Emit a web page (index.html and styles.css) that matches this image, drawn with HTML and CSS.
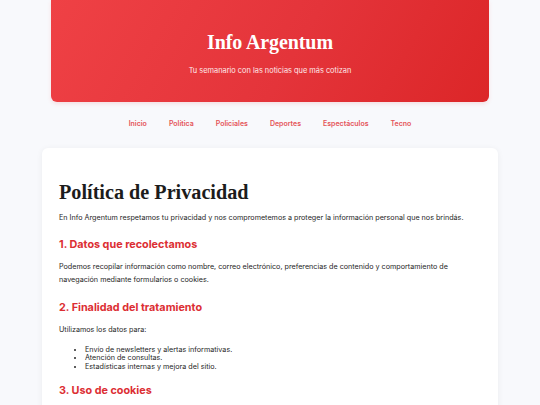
FILE: index.html
```html
<!DOCTYPE html>
<html lang="es">
<head>
<meta charset="utf-8">
<title>Política de Privacidad - Info Argentum</title>
<link rel="stylesheet" href="styles.css">
</head>
<body>
<header class="hero">
  <h1 class="brand">Info Argentum</h1>
  <p class="tagline">Tu semanario con las noticias que más cotizan</p>
</header>
<nav class="nav">
  <a href="#">Inicio</a>
  <a href="#">Política</a>
  <a href="#">Policiales</a>
  <a href="#">Deportes</a>
  <a href="#">Espectáculos</a>
  <a href="#">Tecno</a>
</nav>
<main class="card">
  <h1 class="title">Política de Privacidad</h1>
  <p>En Info Argentum respetamos tu privacidad y nos comprometemos a proteger la información personal que nos brindás.</p>
  <h2>1. Datos que recolectamos</h2>
  <p>Podemos recopilar información como nombre, correo electrónico, preferencias de contenido y comportamiento de navegación mediante formularios o cookies.</p>
  <h2>2. Finalidad del tratamiento</h2>
  <p>Utilizamos los datos para:</p>
  <ul>
    <li>Envío de newsletters y alertas informativas.</li>
    <li>Atención de consultas.</li>
    <li>Estadísticas internas y mejora del sitio.</li>
  </ul>
  <h2>3. Uso de cookies</h2>
</main>
</body>
</html>
```
FILE: styles.css
```css
* { box-sizing: border-box; }
html, body { margin: 0; padding: 0; }
body {
  background: #f8f9fc;
  font-family: Inter, "Noto Sans", sans-serif;
  color: #262626;
}
.hero {
  margin: 0 51px;
  height: 102px;
  border-radius: 0 0 6px 6px;
  background: linear-gradient(120deg, #ef4145 0%, #e4343a 55%, #dc2628 100%);
  display: flex;
  flex-direction: column;
  align-items: center;
  justify-content: center;
  padding-top: 5px;
  color: #fff;
  box-shadow: 0 2px 4px rgba(220, 38, 38, 0.12);
}
.brand {
  margin: 0;
  font-family: "Liberation Serif", "DejaVu Serif", serif;
  font-weight: 700;
  font-size: 20px;
  line-height: 1;
  letter-spacing: -0.1px;
}
.tagline {
  margin: 14px 0 0;
  font-size: 7.4px;
  color: #feeaea;
}
.nav {
  display: flex;
  justify-content: center;
  gap: 22px;
  padding: 17px 0 0;
  height: 46px;
}
.nav a {
  color: #e55459;
  text-decoration: none;
  font-size: 7px;
  font-weight: 600;
}
.card {
  margin: 0 42px;
  background: #fff;
  border-radius: 6px;
  padding: 29px 18px 20px 17px;
  box-shadow: 0 1px 6px rgba(15, 23, 42, 0.06);
  min-height: 300px;
}
.title {
  margin: 0;
  font-family: "Liberation Serif", "DejaVu Serif", serif;
  font-weight: 700;
  font-size: 20.2px;
  line-height: 30px;
  color: #1c1c1c;
}
.card p {
  margin: 0;
  font-size: 7.2px;
  line-height: 13px;
  color: #262626;
}
.title + p { margin-top: 3.5px; }
.card h2 {
  margin: 14.5px 0 8px;
  font-size: 10.8px;
  line-height: 14px;
  font-weight: 700;
  color: #dc2e33;
}
.card ul {
  margin: 10px 0 -1.5px;
  padding-left: 26px;
  font-size: 7.2px;
  line-height: 8.5px;
  color: #262626;
}
```
